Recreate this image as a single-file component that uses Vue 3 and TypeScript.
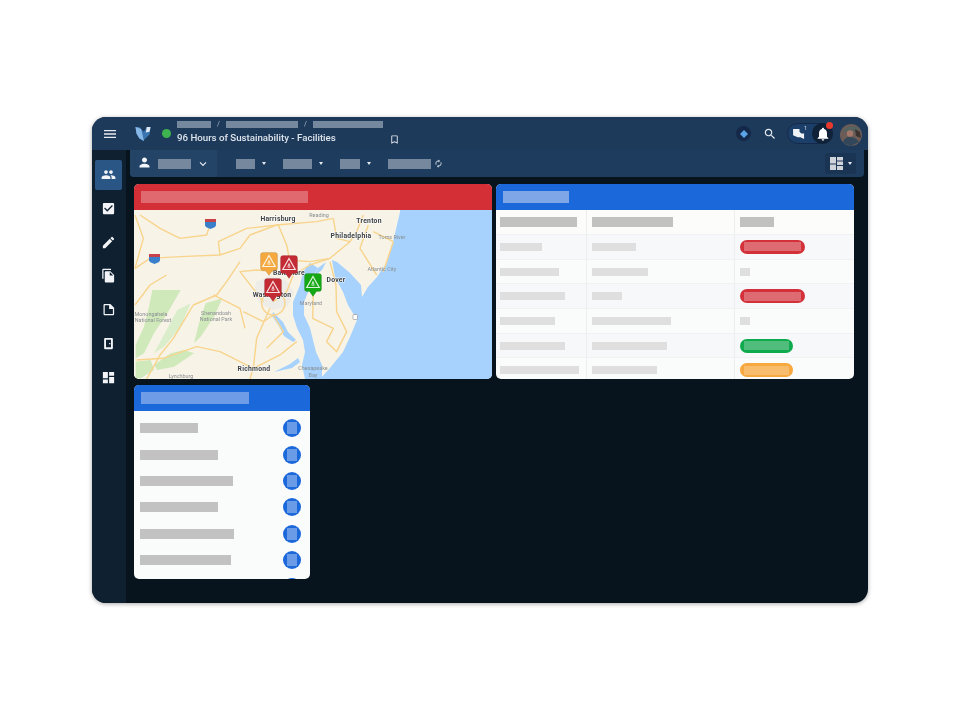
<script setup lang="ts">
interface TableRow {
  a: number
  b: number
  status: 'red' | 'green' | 'orange' | 'none'
}

const navIcons = [
  'M16 11c1.66 0 2.99-1.34 2.99-3S17.66 5 16 5s-3 1.34-3 3 1.34 3 3 3zm-8 0c1.66 0 2.99-1.34 2.99-3S9.66 5 8 5 5 6.34 5 8s1.34 3 3 3zm0 2c-2.33 0-7 1.17-7 3.5V19h14v-2.5C15 14.17 10.33 13 8 13zm8 0c-.29 0-.62.02-.97.05 1.16.84 1.97 1.97 1.97 3.45V19h6v-2.5c0-2.33-4.67-3.5-7-3.5z',
  'M19 3H5c-1.11 0-2 .9-2 2v14c0 1.1.89 2 2 2h14c1.11 0 2-.9 2-2V5c0-1.1-.89-2-2-2zm-9 14l-5-5 1.41-1.41L10 14.17l7.59-7.59L19 8l-9 9z',
  'M3 17.25V21h3.75L17.81 9.94l-3.75-3.75L3 17.25zM20.71 7.04c.39-.39.39-1.02 0-1.41l-2.34-2.34c-.39-.39-1.02-.39-1.41 0l-1.83 1.83 3.75 3.75 1.83-1.83z',
  'M16 1H4c-1.1 0-2 .9-2 2v14h2V3h12V1zm-1 4l6 6v10c0 1.1-.9 2-2 2H7.99C6.89 23 6 22.1 6 21l.01-14c0-1.1.89-2 1.99-2h7zm-1 7h5.5L14 6.5V12z',
  'M6 3h9l6 6v10c0 1.1-.9 2-2 2H6c-1.1 0-2-.9-2-2V5c0-1.1.9-2 2-2zm0 2v14h13v-8h-6V5H6z',
  'M7 3h10c1.1 0 2 .9 2 2v14c0 1.1-.9 2-2 2H7c-1.1 0-2-.9-2-2V5c0-1.1.9-2 2-2zm1 3v12h8V6H8zm5 5h2v2h-2v-2z',
  'M3 13h8V3H3v10zm0 8h8v-6H3v6zm10 0h8V11h-8v10zm0-18v6h8V3h-8z'
]

const filters = [19, 29, 20]

const tableRows: TableRow[] = [
  { a: 42, b: 44, status: 'red' },
  { a: 59, b: 56, status: 'none' },
  { a: 65, b: 30, status: 'red' },
  { a: 55, b: 79, status: 'none' },
  { a: 65, b: 75, status: 'green' },
  { a: 79, b: 65, status: 'orange' }
]

const listItems = [58, 78, 93, 78, 94, 91, 70]

const pins = [
  { color: '#f4a83d', left: 126, top: 42 },
  { color: '#c42a33', left: 146, top: 45 },
  { color: '#c42a33', left: 130, top: 68 },
  { color: '#14a814', left: 170, top: 63 }
]

// road lines, traced in 3x crop coordinates of the map
const roads = [
  'M30 30L90 70L150 100L230 90L240 60',
  'M15 30L40 100L15 190',
  'M15 190L60 160L150 155L270 150L330 130L360 90L440 60L560 50L610 40',
  'M270 150L265 110L350 70L445 60L470 120L480 170L490 210',
  'M610 40L620 100L660 110',
  'M700 30L680 80L660 110L600 160L540 180L490 210',
  'M490 210L470 260L430 290',
  'M470 165L540 170L600 160',
  'M395 295a35 35 0 1 0 70 0a35 35 0 1 0 -70 0',
  'M420 310L380 400L370 490',
  'M370 490L270 440L200 425L100 460L20 465',
  'M330 170L290 230L260 270L190 300L130 400L90 450L50 522',
  'M400 290L330 200L380 195L430 200',
  'M370 490L450 450L500 410',
  'M340 320L400 350L430 330L460 380L410 430',
  'M550 260L548 340L610 370L590 410L620 440L650 380L620 320L618 240L600 170',
  'M715 60L690 130L740 210',
  'M790 110L760 200',
  'M250 270L330 310L345 370',
  'M370 490L360 522',
  'M730 80L790 110',
  'M15 300L60 240L110 210'
]

const placeLabels = [
  { text: 'Harrisburg', x: 278, y: 221, bold: true },
  { text: 'Reading', x: 319, y: 217, bold: false },
  { text: 'Trenton', x: 369, y: 223, bold: true },
  { text: 'Philadelphia', x: 351, y: 238, bold: true },
  { text: 'Toms River', x: 392, y: 239, bold: false },
  { text: 'Atlantic City', x: 382, y: 271, bold: false },
  { text: 'Baltimore', x: 289, y: 275, bold: true },
  { text: 'Dover', x: 336, y: 282, bold: true },
  { text: 'Washington', x: 272, y: 297, bold: true },
  { text: 'Maryland', x: 311, y: 305, bold: false },
  { text: 'Richmond', x: 254, y: 371, bold: true },
  { text: 'Lynchburg', x: 181, y: 378, bold: false },
  { text: 'Chesapeake', x: 313, y: 370, bold: false },
  { text: 'Bay', x: 313, y: 377, bold: false },
  { text: 'Shenandoah', x: 216, y: 315, bold: false },
  { text: 'National Park', x: 216, y: 321, bold: false },
  { text: 'Monongahela', x: 151, y: 316, bold: false },
  { text: 'National Forest', x: 153, y: 322, bold: false }
]
</script>

<template>
  <div class="stage">
    <div class="window">
      <header class="topbar">
        <svg class="menu-icon" viewBox="0 0 24 24"><path d="M3 18h18v-2H3v2zm0-5h18v-2H3v2zm0-7v2h18V6H3z" /></svg>
        <svg class="logo" viewBox="0 0 16 16">
          <path d="M0 1l16 0-1 8-7 7-4-3-3-5z" fill="#3a74b0" />
          <path d="M0 1l6 2 3 13-5-3-3-5z" fill="#86b7e6" />
          <path d="M4 1h8L9 6z" fill="#1d3a5b" />
          <path d="M12 1h4l-1 5-4 1z" fill="#dfe9f3" />
        </svg>
        <span class="status-dot"></span>
        <div class="crumbs">
          <div class="crumb-row">
            <span class="ph crumb c1"></span><i>/</i>
            <span class="ph crumb c2"></span><i>/</i>
            <span class="ph crumb c3"></span>
          </div>
          <div class="title">96 Hours of Sustainability - Facilities</div>
        </div>
        <svg class="bookmark" viewBox="0 0 24 24"><path d="M17 3H7c-1.1 0-1.99.9-1.99 2L5 21l7-3 7 3V5c0-1.1-.9-2-2-2zm0 15l-5-2.18L7 18V5h10v13z" /></svg>

        <div class="top-actions">
          <span class="gem"><svg viewBox="0 0 10 10"><path d="M5 0l5 5-5 5-5-5z" fill="#5aa2ea" /></svg></span>
          <svg class="search" viewBox="0 0 24 24"><path d="M15.5 14h-.79l-.28-.27C15.41 12.59 16 11.11 16 9.5 16 5.91 13.09 3 9.5 3S3 5.91 3 9.5 5.91 16 9.5 16c1.61 0 3.09-.59 4.23-1.57l.27.28v.79l5 4.99L20.49 19l-4.99-5zm-6 0C7.01 14 5 11.99 5 9.5S7.01 5 9.5 5 14 7.01 14 9.5 11.99 14 9.5 14z" /></svg>
          <div class="pill">
            <span class="chat">
              <svg viewBox="0 0 14 12"><path d="M0 1h7v3l2 2h3v6l-4-2H5L0 8z" fill="#eef2f7" /></svg>
              <b>1</b>
            </span>
            <span class="bell">
              <svg viewBox="0 0 24 24"><path d="M12 22c1.1 0 2-.9 2-2h-4c0 1.1.9 2 2 2zm6-6v-5c0-3.07-1.63-5.64-4.5-6.32V4c0-.83-.67-1.5-1.5-1.5s-1.5.67-1.5 1.5v.68C7.64 5.36 6 7.92 6 11v5l-2 2v1h16v-1l-2-2z" /></svg>
              <em></em>
            </span>
          </div>
          <svg class="avatar" viewBox="0 0 22 22">
            <circle cx="11" cy="11" r="11" fill="#6b5c58" />
            <path d="M3 8c2-6 12-8 17-3l-4 3-4-1z" fill="#56625f" />
            <circle cx="10" cy="9.500" r="3.200" fill="#a5796a" />
            <path d="M3 19c1-5 4-6 7-6s6 1 9 5l-8 4z" fill="#32485a" />
            <path d="M15 5l5 3 1 6-5-2z" fill="#3c3331" />
          </svg>
        </div>
      </header>

      <div class="body">
        <nav class="sidebar">
          <div v-for="(d, i) in navIcons" :key="i" class="nav-item" :class="{ active: i === 0 }">
            <svg viewBox="0 0 24 24"><path :d="d" fill-rule="evenodd" /></svg>
          </div>
        </nav>

        <main class="main">
          <div class="subbar">
            <div class="user-tab">
              <svg class="user-icon" viewBox="0 0 24 24"><path d="M12 12c2.21 0 4-1.79 4-4s-1.79-4-4-4-4 1.79-4 4 1.79 4 4 4zm0 2c-2.67 0-8 1.34-8 4v2h16v-2c0-2.66-5.33-4-8-4z" /></svg>
              <span class="ph user-name"></span>
              <svg class="chevron" viewBox="0 0 12 8"><polyline points="1.500,1.500 6,6 10.500,1.500" /></svg>
            </div>
            <div class="filters">
              <div v-for="w in filters" :key="w" class="filter">
                <span class="ph sub-ph" :style="{ width: w + 'px' }"></span>
                <span class="caret"></span>
              </div>
              <div class="filter refresh">
                <span class="ph sub-ph wide"></span>
                <svg viewBox="0 0 24 24"><path d="M12 6v3l4-4-4-4v3c-4.42 0-8 3.58-8 8 0 1.57.46 3.03 1.24 4.26L6.7 14.8c-.45-.83-.7-1.79-.7-2.8 0-3.31 2.69-6 6-6zm6.76 1.74L17.3 9.2c.44.84.7 1.79.7 2.8 0 3.31-2.69 6-6 6v-3l-4 4 4 4v-3c4.42 0 8-3.58 8-8 0-1.57-.46-3.03-1.24-4.26z" /></svg>
              </div>
            </div>
            <div class="layout-btn">
              <svg viewBox="0 0 13 13">
                <rect x="0" y="0" width="6" height="6.500" />
                <rect x="0" y="7.500" width="6" height="5.500" />
                <rect x="7" y="0" width="6" height="3.500" />
                <rect x="7" y="4.500" width="6" height="3.500" />
                <rect x="7" y="9" width="6" height="4" />
              </svg>
              <span class="caret"></span>
            </div>
          </div>

          <div class="dashboard">
            <section class="panel">
              <div class="panel-head red"><span class="head-ph map-ph"></span></div>
              <div class="map">
                <svg class="map-svg" viewBox="134 210 358 169" preserveAspectRatio="none">
                  <rect x="134" y="210" width="358" height="169" fill="#f7f3e7" />
                  <!-- green ridges -->
                  <g transform="translate(134 290) scale(.3333)" fill="#cfe9bb">
                    <path d="M55 0L140 0L100 70L60 130L30 190L5 205L5 165L30 110L45 50z" />
                    <path d="M130 60L170 40L140 110L90 170L60 190z" fill="#dbeecb" />
                    <path d="M215 40L265 25L240 80L200 140L180 160L195 100z" />
                    <path d="M150 180L180 190L120 230L70 240L60 225L110 190z" />
                    <path d="M5 215L50 210L60 240L20 265L5 265z" />
                  </g>
                  <path d="M256 282l14-6 16 4 8 12-6 14-14 4-14-6-6-12z" fill="#eeece6" />
                  <!-- ocean with delaware bay -->
                  <path d="M400 210L400 212L397 225L393 242L387 262L377 277L368 287L362 297L361 285L350 273L337 262L332 260L335 277L343 292L348 305L357 320L350 337L343 352L330 368L320 379H492V210z" fill="#a6d2fd" />
                  <!-- chesapeake -->
                  <path d="M310 263L303 272L300 285L293 302L293 315L297 328L303 340L305 352L302 365L305 379H322L322 365L316 352L313 340L310 328L304 315L304 302L309 290L312 278L318 268z" fill="#a6d2fd" />
                  <path d="M273 312L283 322L288 332L296 340L293 342L284 336L279 326L272 316z" fill="#a6d2fd" />
                  <path d="M318 268L326 262L322 270L314 276z" fill="#a6d2fd" />
                  <path d="M274 372L290 364L298 358L300 362L292 368z" fill="#a6d2fd" />
                  <g transform="translate(130 205) scale(.3333)" class="roads">
                    <path v-for="(d, i) in roads" :key="i" :d="d" />
                  </g>
                  <!-- shields -->
                  <path d="M205 219h11v6c0 2-3 3-5.500 4-2.500-1-5.500-2-5.500-4z" fill="#3a7fc9" />
                  <rect x="205" y="219" width="11" height="3" fill="#c9424a" />
                  <path d="M149 254h11v6c0 2-3 3-5.500 4-2.500-1-5.500-2-5.500-4z" fill="#3a7fc9" />
                  <rect x="149" y="254" width="11" height="3" fill="#c9424a" />
                  <rect x="353" y="314.500" width="4.500" height="5" rx="1" fill="#fff" stroke="#777" stroke-width=".5" />
                  <text
                    v-for="p in placeLabels"
                    :key="p.text"
                    :x="p.x"
                    :y="p.y"
                    class="place"
                    :class="{ major: p.bold }"
                  >{{ p.text }}</text>
                </svg>
                <svg
                  v-for="(pin, i) in pins"
                  :key="i"
                  class="pin"
                  viewBox="0 0 18 24"
                  :style="{ left: pin.left + 'px', top: pin.top + 'px' }"
                >
                  <path d="M3 .5h12A2.500 2.500 0 0 1 17.500 3v13a2.500 2.500 0 0 1-2.500 2.500h-2.500L9 23.500l-3.500-5H3A2.500 2.500 0 0 1 .5 16V3A2.500 2.500 0 0 1 3 .5z" :fill="pin.color" stroke="rgba(0,0,0,.1)" />
                  <path d="M9 3.500l6.200 11H2.800z" fill="none" stroke="#fff" stroke-width="1.200" stroke-opacity=".85" />
                  <path d="M9 7.500l2.700 5H6.300z" fill="#fff" fill-opacity=".35" />
                  <rect x="8.500" y="8.500" width="1" height="2.500" fill="#fff" />
                  <rect x="8.500" y="11.800" width="1" height="1" fill="#fff" />
                </svg>
              </div>
            </section>

            <section class="panel">
              <div class="panel-head blue"><span class="head-ph table-ph"></span></div>
              <div class="table">
                <div class="t-row t-head">
                  <div class="cell"><span class="ph-h w77"></span></div>
                  <div class="cell"><span class="ph-h w81"></span></div>
                  <div class="cell"><span class="ph-h w34"></span></div>
                </div>
                <div v-for="(row, i) in tableRows" :key="i" class="t-row" :class="{ alt: i % 2 === 0 }">
                  <div class="cell"><span class="ph-c" :style="{ width: row.a + 'px' }"></span></div>
                  <div class="cell"><span class="ph-c" :style="{ width: row.b + 'px' }"></span></div>
                  <div class="cell">
                    <span v-if="row.status === 'none'" class="ph-c tiny"></span>
                    <span v-else class="badge" :class="row.status"><span></span></span>
                  </div>
                </div>
              </div>
            </section>

            <section class="panel list-panel">
              <div class="panel-head blue"><span class="head-ph list-ph"></span></div>
              <ul class="list">
                <li v-for="(w, i) in listItems" :key="i">
                  <span class="ph-l" :style="{ width: w + 'px' }"></span>
                  <span class="round"><span></span></span>
                </li>
              </ul>
            </section>
          </div>
        </main>
      </div>
    </div>
  </div>
</template>

<style scoped>
.stage {
  width: 960px;
  height: 720px;
  box-sizing: border-box;
  padding: 117px 92px 0;
  font-family: Roboto, "Liberation Sans", sans-serif;
}

.window {
  width: 776px;
  height: 486px;
  border-radius: 14px;
  overflow: hidden;
  display: flex;
  flex-direction: column;
  background: #07131d;
  box-shadow: 0 1px 4px rgba(0, 0, 0, 0.35);
  filter: blur(0.35px);
}

/* top bar */
.topbar {
  height: 33px;
  flex: none;
  display: flex;
  align-items: center;
  background: #1d3a5b;
  position: relative;
}

.menu-icon {
  width: 16px;
  height: 16px;
  margin-left: 10px;
  fill: #e6ebf1;
}

.logo {
  width: 16px;
  height: 15px;
  margin-left: 17px;
  margin-top: -1px;
}

.status-dot {
  width: 9px;
  height: 9px;
  border-radius: 50%;
  margin-left: 11px;
  background: #3fb34f;
}

.crumbs {
  margin-left: 6px;
  width: 215px;
  margin-top: 0;
}

.crumb-row {
  display: flex;
  align-items: center;
  height: 8px;
  margin-bottom: 3px;
  margin-top: -2px;
}

.crumb-row i {
  width: 15px;
  text-align: center;
  font-size: 7px;
  line-height: 7px;
  font-style: normal;
  color: #a9b6c5;
}

.ph {
  display: block;
  background: #76889d;
}

.crumb {
  height: 7px;
}

.c1 { width: 34px; }
.c2 { width: 72px; }
.c3 { width: 70px; }

.title {
  font-size: 9.7px;
  line-height: 14px;
  font-weight: 500;
  color: #dfe5ec;
  white-space: nowrap;
}

.bookmark {
  width: 11px;
  height: 11px;
  fill: #e6ebf1;
  margin-left: -3px;
  margin-top: 12px;
}

.top-actions {
  margin-left: auto;
  display: flex;
  align-items: center;
  margin-right: 6px;
}

.gem {
  width: 15px;
  height: 15px;
  border-radius: 50%;
  background: #14294a;
  display: flex;
  align-items: center;
  justify-content: center;
}

.gem svg {
  width: 8px;
  height: 8px;
}

.search {
  width: 14px;
  height: 14px;
  fill: #e6ebf1;
  margin-left: 12px;
}

.pill {
  width: 46px;
  height: 21px;
  margin-left: 10px;
  border-radius: 11px;
  background: #1b3f68;
  border: 1px solid #14294a;
  box-sizing: border-box;
  display: flex;
  align-items: center;
  justify-content: space-between;
}

.chat {
  position: relative;
  width: 13px;
  height: 11px;
  margin-left: 5px;
}

.chat svg {
  display: block;
  width: 13px;
  height: 11px;
}

.chat b {
  position: absolute;
  right: -1px;
  top: -3px;
  font-size: 5px;
  line-height: 6px;
  font-weight: 400;
  color: #dfe6ee;
}

.bell {
  position: relative;
  width: 21px;
  height: 21px;
  margin-right: -1px;
  border-radius: 50%;
  background: #0f2238;
  display: flex;
  align-items: center;
  justify-content: center;
}

.bell svg {
  width: 16px;
  height: 16px;
  fill: #fff;
}

.bell em {
  position: absolute;
  right: 0;
  top: -1px;
  width: 7px;
  height: 7px;
  border-radius: 50%;
  background: #e8392f;
}

.avatar {
  width: 22px;
  height: 22px;
  margin-left: 7px;
  margin-top: 2px;
}

/* layout under the top bar */
.body {
  flex: 1;
  display: flex;
  min-height: 0;
}

.sidebar {
  width: 34px;
  flex: none;
  background: #0f2030;
  padding: 10px 0 0 3px;
  box-sizing: border-box;
  display: flex;
  flex-direction: column;
}

.nav-item {
  width: 27px;
  height: 30px;
  margin-bottom: 3.8px;
  border-radius: 2px;
  display: flex;
  align-items: center;
  justify-content: center;
}

.nav-item.active {
  background: #2a5686;
}

.nav-item svg {
  width: 15px;
  height: 15px;
  margin-top: -1px;
  fill: #f2f4f7;
}

.main {
  flex: 1;
  min-width: 0;
  display: flex;
  flex-direction: column;
}

.subbar {
  height: 27px;
  flex: none;
  margin: 0 4px;
  display: flex;
  align-items: center;
  background: #1e3c5e;
  border-radius: 0 0 4px 4px;
}

.user-tab {
  width: 87px;
  height: 100%;
  flex: none;
  display: flex;
  align-items: center;
  background: #234467;
  border-radius: 0 0 0 4px;
}

.user-icon {
  width: 15px;
  height: 15px;
  margin-left: 7px;
  fill: #f2f4f7;
  margin-top: -2px;
}

.user-name {
  width: 33px;
  height: 10px;
  margin-left: 6px;
}

.chevron {
  width: 8px;
  height: 6px;
  margin-left: 8px;
  fill: none;
  stroke: #e6ebf1;
  stroke-width: 1.8;
}

.filters {
  display: flex;
  align-items: center;
  margin-left: 19px;
}

.filter {
  display: flex;
  align-items: center;
  margin-right: 17px;
}

.sub-ph {
  height: 10px;
}

.sub-ph.wide {
  width: 43px;
}

.caret {
  width: 0;
  height: 0;
  margin-left: 7px;
  border-left: 2.5px solid transparent;
  border-right: 2.5px solid transparent;
  border-top: 3px solid #e6ebf1;
}

.refresh svg {
  width: 9px;
  height: 9px;
  margin-left: 3px;
  fill: #e6ebf1;
}

.layout-btn {
  margin-left: auto;
  margin-right: 8px;
  width: 31px;
  height: 21px;
  border-radius: 2px;
  background: #1a3554;
  display: flex;
  align-items: center;
  padding-left: 5px;
  box-sizing: border-box;
}

.layout-btn svg {
  width: 13px;
  height: 13px;
  fill: #cfd4da;
}

.layout-btn .caret {
  margin-left: 5px;
}

/* panels */
.dashboard {
  display: grid;
  grid-template-columns: 358px 358px;
  grid-template-rows: 195px 194px;
  column-gap: 4px;
  row-gap: 6px;
  padding: 7px 0 0 8px;
}

.panel {
  display: flex;
  flex-direction: column;
  min-height: 0;
  overflow: hidden;
  border-radius: 5px;
  background: #fafbfb;
}

.list-panel {
  width: 176px;
}

.panel-head {
  height: 26px;
  flex: none;
  display: flex;
  align-items: center;
  padding-left: 7px;
}

.panel-head.red {
  background: #d42f37;
}

.panel-head.blue {
  background: #1b68db;
}

.head-ph {
  display: block;
  height: 12px;
}

.map-ph {
  width: 167px;
  background: #e0696f;
}

.table-ph {
  width: 66px;
  background: #7fa7e8;
}

.list-ph {
  width: 108px;
  background: #6e9ce6;
}

.map {
  position: relative;
  flex: 1;
  min-height: 0;
}

.map-svg {
  display: block;
  width: 100%;
  height: 100%;
  filter: blur(0.3px);
}

.roads path {
  fill: none;
  stroke: #f8d48c;
  stroke-width: 4.2;
  stroke-linejoin: round;
}

.place {
  font-family: Roboto, "Liberation Sans", sans-serif;
  font-size: 5.4px;
  fill: #8a8f92;
  text-anchor: middle;
}

.place.major {
  font-size: 6.8px;
  font-weight: 700;
  fill: #3c4043;
  letter-spacing: 0.25px;
  paint-order: stroke;
  stroke: #fff;
  stroke-width: 0.8px;
}

.pin {
  position: absolute;
  width: 18px;
  height: 24px;
}

/* table */
.table {
  flex: 1;
  min-height: 0;
  overflow: hidden;
}

.t-row {
  display: grid;
  grid-template-columns: 91px 148px 1fr;
  height: 24.7px;
  box-sizing: border-box;
  border-bottom: 1px solid #f0f1f2;
}

.t-row.alt {
  background: #f7f8f9;
}

.t-head {
  height: 25px;
  background: #fcfcfb;
}

.cell {
  display: flex;
  align-items: center;
  padding-left: 4px;
  border-right: 1px solid #eceef0;
}

.cell + .cell {
  padding-left: 5px;
}

.cell:last-child {
  border-right: 0;
}

.ph-h {
  display: block;
  height: 10px;
  background: #c1c1c0;
}

.w77 { width: 77px; }
.w81 { width: 81px; }
.w34 { width: 34px; }

.ph-c {
  display: block;
  height: 8px;
  background: #dfdfdf;
}

.ph-c.tiny {
  width: 10px;
}

.badge {
  width: 65px;
  height: 14px;
  box-sizing: border-box;
  border-radius: 7px;
  display: flex;
  align-items: center;
  padding: 0 4px;
}

.badge span {
  display: block;
  width: 100%;
  height: 9px;
}

.badge.red { background: #d3303a; }
.badge.red span { background: #de6a72; }
.badge.green { width: 53px; background: #10aa4e; }
.badge.green span { background: #50bd7c; }
.badge.orange { width: 53px; background: #f7a93f; }
.badge.orange span { background: #f8bd6c; }

/* list */
.list {
  list-style: none;
  margin: 0;
  padding: 4px 0 0;
  flex: 1;
  min-height: 0;
  overflow: hidden;
}

.list li {
  height: 26.4px;
  display: flex;
  align-items: center;
  justify-content: space-between;
  padding: 0 9px 0 6px;
}

.ph-l {
  display: block;
  height: 10px;
  background: #c2c2c2;
}

.round {
  width: 18px;
  height: 18px;
  border-radius: 50%;
  background: #1b68db;
  display: flex;
  align-items: center;
  justify-content: center;
}

.round span {
  display: block;
  width: 10px;
  height: 12px;
  background: #6a9be6;
}
</style>

<style>
html,
body {
  background: #fff;
}
</style>
